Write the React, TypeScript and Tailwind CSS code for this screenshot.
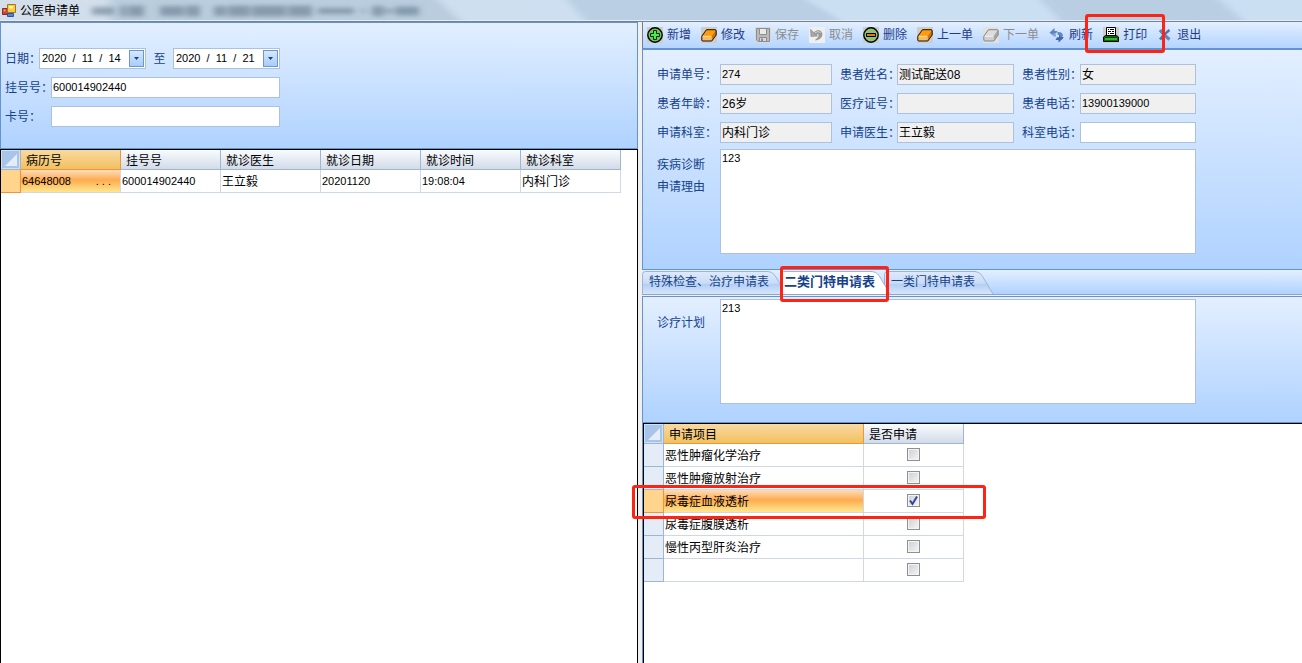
import { useState } from 'react';
import type { ReactNode } from 'react';
import clsx from 'clsx';

const fieldClass =
  'block h-[21px] w-full min-w-0 border border-[#abc1de] px-px pb-[2px] text-black outline-none';

function PlusIcon() {
  return (
    <svg width="16" height="16" viewBox="0 0 16 16">
      <rect width="16" height="16" fill="#cfcdc9" />
      <circle cx="8" cy="8" r="7.2" fill="#7cbf62" stroke="#000" strokeWidth="1.4" />
      <path d="M6.5 3.5h3v3h3v3h-3v3h-3v-3h-3v-3h3z" fill="#3df04c" stroke="#0b2b0b" />
    </svg>
  );
}

function MinusIcon() {
  return (
    <svg width="16" height="16" viewBox="0 0 16 16">
      <rect width="16" height="16" fill="#cfcdc9" />
      <circle cx="8" cy="8" r="7.2" fill="#8cc474" stroke="#000" strokeWidth="1.4" />
      <path d="M3.5 6.5h9v3h-9z" fill="#e8742a" stroke="#000" />
    </svg>
  );
}

function EraserIcon({ muted }: { muted?: boolean }) {
  return (
    <svg width="16" height="16" viewBox="0 0 16 16">
      <rect width="16" height="16" fill={muted ? '#e3e1de' : '#cfcdc9'} />
      <path d="M.8 9L5.5 2.5H15L10.5 9z" fill={muted ? '#dcdcdc' : '#ff9a0a'} />
      <path d="M10.5 9L15 2.8V8l-4.5 6z" fill={muted ? '#a9a9a9' : '#d87400'} />
      <path d="M.8 9h9.7v4.8H.8z" fill={muted ? '#d0d0d0' : '#ffb95c'} />
      <path d="M1.5 9.3h8.5" stroke={muted ? '#f0f0f0' : '#ffdca6'} />
      <path
        d="M.8 13V9.2L5.4 2.7H14q1.2 0 1.2 1.2V8l-4.4 6H1.8q-1 0-1-1z"
        fill="none"
        stroke={muted ? '#858585' : '#1a1000'}
        strokeWidth="1"
      />
    </svg>
  );
}

function SaveIcon() {
  return (
    <svg width="16" height="16" viewBox="0 0 16 16">
      <rect width="16" height="16" fill="#d9d9d9" />
      <path d="M1.5 1.5h13v13H3l-1.5-1.5z" fill="#bababa" stroke="#8c8c8c" />
      <path d="M4.5 1.5h7v6h-7z" fill="#eaeaea" stroke="#8c8c8c" />
      <path d="M4.5 10.5h7v4h-7z" fill="#d8d8d8" stroke="#8c8c8c" />
      <path d="M6 11.5h2v2.5H6z" fill="#8c8c8c" />
    </svg>
  );
}

function UndoIcon() {
  return (
    <svg width="16" height="16" viewBox="0 0 16 16">
      <rect width="16" height="16" fill="#efefef" />
      <path
        d="M4.5 6.5C7 2.5 12.5 2.5 13 7C13.2 10 11 12.5 6.5 13C9 11 10.5 9.5 9.8 7.5C9 6 7.5 7 7 8.5z"
        fill="#9a9a9a"
        stroke="#868686"
        strokeWidth=".6"
      />
      <path d="M1.5 2.5l2.5 2.2L8.5 9 2 9.5z" fill="#a6a6a6" stroke="#868686" strokeWidth=".6" />
      <path d="M6 5.8Q9 3.5 11.5 5.5" fill="none" stroke="#d6d6d6" />
    </svg>
  );
}

function RefreshIcon() {
  return (
    <svg width="16" height="16" viewBox="0 0 16 16">
      <path d="M.5 5.8L5.5 1v3h3L7 6.5H5.5v3z" fill="#5f85bd" />
      <path d="M3 7.5Q3.5 10 7 9.5L7 7.3Q5.500 7.5 5.500 6z" fill="#86a5d0" />
      <path d="M14.8 10.800L9.500 15.5v-2.500H6.500L8 10.300h2V7.300z" fill="#3f68a8" />
      <path d="M8.5 5Q13.8 4.5 14 9L11.500 10Q11 7.500 8.500 7.800z" fill="#6089c2" />
    </svg>
  );
}

function PrinterIcon() {
  return (
    <svg width="16" height="16" viewBox="0 0 16 16">
      <rect width="16" height="16" fill="#cfcdc9" />
      <path d="M3.5 .5h9v8h-9z" fill="#fff" stroke="#000" />
      <path d="M5 2.5h1m1 0h4M5 4.5h3m1 0h2M5 6.5h1m1 0h4" stroke="#000" />
      <path d="M.5 10L2.5 8.5h11l2 1.5v4.5H.5z" fill="#0b6a10" stroke="#000" />
      <path d="M2 10.5h12" stroke="#123c10" />
      <path d="M2 12h12" stroke="#3ee03a" strokeWidth="1.4" />
    </svg>
  );
}

function CloseIcon() {
  return (
    <svg width="16" height="16" viewBox="0 0 16 16" fill="none" stroke="#6186bd">
      <path d="M3 3Q6 7 12.5 12.5" strokeWidth="3.2" />
      <path d="M12.5 3Q7 7 3 12.5" strokeWidth="2.6" stroke="#4f76b2" />
    </svg>
  );
}

function FormIcon() {
  return (
    <svg width="14" height="14" viewBox="0 0 14 14">
      <path d="M.5 4.5h5v6h-5z" fill="#d8402a" stroke="#8c2a1c" />
      <path d="M5.5 .5h8v8h-8z" fill="#fbc93a" stroke="#a37a12" />
      <path d="M7 2h4v2.5H7z" fill="#fff0b0" />
      <path d="M5.5 9.5h6v3h-6z" fill="#4a84e0" stroke="#2a56a8" />
      <path d="M1.5 5.5h2v2h-2z" fill="#f39a86" />
    </svg>
  );
}

// Blurred caption of the window that shines through the glass title bar: x, width, height.
const ghostMarks = [
  [92, 22, 8], [120, 6, 11], [128, 16, 11], [160, 24, 10], [186, 14, 11], [214, 12, 10],
  [228, 22, 11], [252, 34, 11], [288, 24, 11], [318, 36, 6], [362, 3, 5], [372, 12, 10],
  [386, 6, 5], [395, 24, 9],
];

function TitleBar() {
  return (
    <header className="relative flex h-[22px] items-center overflow-hidden border-b border-[#77838f] bg-linear-to-r from-[#d3dfea] to-[#cbdff3] to-60%">
      <svg className="absolute inset-0" width="100%" height="22" aria-hidden="true">
        <defs>
          <filter id="glass" x="-10%" y="-50%" width="120%" height="200%">
            <feGaussianBlur stdDeviation="5 1" />
          </filter>
          <filter id="ghost" x="-10%" y="-50%" width="120%" height="200%">
            <feGaussianBlur stdDeviation="3 2" />
          </filter>
        </defs>
        <g filter="url(#glass)">
          <path d="M110 -4H434L466 26H110z" fill="#b2c7d8" opacity=".75" />
          <path d="M564 -4H800L850 26H590z" fill="#b4c9de" opacity=".75" />
          <path d="M1036 -4H1215L1250 26H1066z" fill="#b3c8de" opacity=".75" />
        </g>
        <g filter="url(#ghost)">
          {ghostMarks.map(([x, w, h]) => (
            <rect key={x} x={x} y={11 - h / 2} width={w} height={h} fill="#54687c" opacity=".5" />
          ))}
        </g>
        <path d="M0 20.5H4000" stroke="#e4edf5" />
      </svg>
      <h1 className="relative flex items-center gap-1 pl-[2px] text-[12px]">
        <FormIcon />
        公医申请单
      </h1>
    </header>
  );
}

function DateField({ id, label, initial }: { id: string; label: string; initial: string }) {
  const [value, setValue] = useState(initial);
  return (
    <div className="flex h-[21px] w-[107px] border border-[#abc1de] bg-white p-px">
      <input
        id={id}
        aria-label={label}
        className="min-w-0 flex-1 px-px pb-[2px] text-[11px] text-black outline-none"
        value={value}
        onChange={(e) => setValue(e.target.value)}
      />
      <button
        type="button"
        aria-label={label + '选择'}
        className="flex w-[15px] items-center justify-center border border-[#6f96cc] bg-linear-to-b from-[#d5e7fd] to-[#a9ccf8]"
      >
        <svg width="5" height="3" viewBox="0 0 5 3">
          <path d="M0 0h5L2.5 3z" fill="#15428b" />
        </svg>
      </button>
    </div>
  );
}

function SearchPanel() {
  return (
    <form className="flex h-[127px] flex-col gap-2 border border-[#6593cf] bg-linear-to-b from-[#e3efff] to-[#afd2ff] pt-[25px] pl-1 text-[#15428b]">
      <div className="flex h-[21px] items-center">
        <label htmlFor="from" className="w-[34px] whitespace-nowrap">日期：</label>
        <DateField id="from" label="开始日期" initial="2020  /  11  /  14" />
        <label htmlFor="to" className="w-[27px] text-center">至</label>
        <DateField id="to" label="结束日期" initial="2020  /  11  /  21" />
      </div>
      <div className="flex h-[21px] items-center">
        <label htmlFor="regNo" className="w-[46px] shrink-0 whitespace-nowrap">挂号号：</label>
        <div className="w-[229px]">
          <input id="regNo" className={clsx(fieldClass, 'bg-white text-[11px]')} defaultValue="600014902440" />
        </div>
      </div>
      <div className="flex h-[21px] items-center">
        <label htmlFor="cardNo" className="w-[46px] shrink-0 whitespace-nowrap">卡号：</label>
        <div className="w-[229px]">
          <input id="cardNo" className={clsx(fieldClass, 'bg-white text-[11px]')} />
        </div>
      </div>
    </form>
  );
}

function HeaderCell({ active, children }: { active?: boolean; children: ReactNode }) {
  return (
    <th
      className={clsx(
        'h-5 border-r border-b bg-linear-to-b pt-[2px] pl-[5px] text-left font-normal',
        active
          ? 'border-[#f29536] from-[#f9d99f] to-[#f1c15f]'
          : 'border-[#9eb6ce] from-[#f9fcfd] to-[#d3dbe9]',
      )}
    >
      {children}
    </th>
  );
}

function CornerCell() {
  return (
    <th className="h-5 border-r border-b border-[#9eb6ce] bg-[#a9c4e9] p-0">
      <svg width="19" height="19" viewBox="0 0 19 19" className="block" aria-hidden="true">
        <path d="M.5 .5h18v18H.5z" fill="none" stroke="#cfdff4" />
        <path d="M16 4v12H4z" fill="#e4ecf7" />
      </svg>
    </th>
  );
}

function VisitTable() {
  return (
    <div className="flex-1 border-x border-t border-black bg-white">
      <table className="w-[620px] table-fixed border-separate border-spacing-0">
        <colgroup>
          <col className="w-5" />
          <col span={6} />
        </colgroup>
        <thead>
          <tr>
            <CornerCell />
            <HeaderCell active>病历号</HeaderCell>
            <HeaderCell>挂号号</HeaderCell>
            <HeaderCell>就诊医生</HeaderCell>
            <HeaderCell>就诊日期</HeaderCell>
            <HeaderCell>就诊时间</HeaderCell>
            <HeaderCell>就诊科室</HeaderCell>
          </tr>
        </thead>
        <tbody>
          <tr className="[&>td]:h-[23px] [&>td]:border-r [&>td]:border-b [&>td]:border-[#d0d7e5] [&>td]:pl-px">
            <th className="border-r border-b border-[#f29536] bg-[#ffd58d]" />
            <td className="bg-linear-to-b from-[#fbdcb8] via-[#ffab4d] via-45% to-[#fee78f] text-[11px]">
              <div className="flex items-center justify-between pr-[9px]">
                64648008
                <button type="button">. . .</button>
              </div>
            </td>
            <td className="text-[11px]">600014902440</td>
            <td className="pt-[2px]">王立毅</td>
            <td className="text-[11px]">20201120</td>
            <td className="text-[11px]">19:08:04</td>
            <td className="pt-[2px]">内科门诊</td>
          </tr>
        </tbody>
      </table>
    </div>
  );
}

const actions = [
  { label: '新增', icon: <PlusIcon /> },
  { label: '修改', icon: <EraserIcon /> },
  { label: '保存', icon: <SaveIcon />, disabled: true },
  { label: '取消', icon: <UndoIcon />, disabled: true },
  { label: '删除', icon: <MinusIcon /> },
  { label: '上一单', icon: <EraserIcon /> },
  { label: '下一单', icon: <EraserIcon muted />, disabled: true },
  { label: '刷新', icon: <RefreshIcon /> },
  { label: '打印', icon: <PrinterIcon />, marked: true },
  { label: '退出', icon: <CloseIcon /> },
];

function Toolbar() {
  return (
    <div className="flex h-[27px] items-center gap-[10px] border-b border-l border-b-[#6593cf] border-l-[#6f7f92] bg-linear-to-b from-[#e3efff] to-[#b4d4ff] pl-1">
      {actions.map((action) => (
        <button
          key={action.label}
          type="button"
          disabled={action.disabled}
          className={clsx(
            'relative flex items-center gap-1 whitespace-nowrap',
            action.disabled ? 'text-[#8d8d8d]' : 'text-[#1e3c8c]',
          )}
        >
          {action.icon}
          {action.label}
          {action.marked && (
            <span className="pointer-events-none absolute -inset-x-[18px] -top-[13px] -bottom-[10px] z-10 rounded-[3px] border-3 border-[#ff2314]" />
          )}
        </button>
      ))}
    </div>
  );
}

const details = [
  { id: 'applyNo', label: '申请单号：', value: '274', numeric: true },
  { id: 'name', label: '患者姓名：', value: '测试配送08' },
  { id: 'gender', label: '患者性别：', value: '女' },
  { id: 'age', label: '患者年龄：', value: '26岁' },
  { id: 'medNo', label: '医疗证号：', value: '' },
  { id: 'phone', label: '患者电话：', value: '13900139000', numeric: true },
  { id: 'dept', label: '申请科室：', value: '内科门诊' },
  { id: 'doctor', label: '申请医生：', value: '王立毅' },
  { id: 'deptPhone', label: '科室电话：', value: '', editable: true },
];

function DetailPanel() {
  return (
    <form className="h-[221px] border border-r-0 border-[#6593cf] bg-linear-to-b from-[#e3efff] to-[#afd2ff] pt-[14px] pl-[14px] text-[#15428b]">
      <div className="grid grid-cols-[63px_112px_65px_117px_66px_116px] items-center gap-y-2">
        {details.map((d, i) => (
          <div key={d.id} className="contents">
            <label htmlFor={d.id} className={clsx('whitespace-nowrap', i % 3 > 0 && 'pl-2')}>
              {d.label}
            </label>
            <input
              id={d.id}
              readOnly={!d.editable}
              defaultValue={d.value}
              className={clsx(
                fieldClass,
                'relative',
                d.editable ? 'bg-white' : 'bg-[#f0f0f0]',
                d.numeric && 'text-[11px]',
              )}
            />
          </div>
        ))}
      </div>
      <div className="mt-[6px] flex">
        <label htmlFor="reason" className="w-[63px] pt-[5px] leading-[22px]">
          疾病诊断
          <br />
          申请理由
        </label>
        <textarea
          id="reason"
          defaultValue="123"
          className="h-[105px] w-[476px] resize-none border border-[#abc1de] bg-white px-px text-[11px] text-black outline-none"
        />
      </div>
    </form>
  );
}

const tabs = [
  { label: '特殊检查、治疗申请表', width: 145 },
  { label: '二类门特申请表', width: 111 },
  { label: '一类门特申请表', width: 110 },
];

function TabStrip() {
  const [active, setActive] = useState(1);
  return (
    <div className="border-b border-[#8ba5cc] bg-linear-to-b from-[#e3efff] to-[#afd2ff]">
      <div role="tablist" className="flex h-6 items-end">
        {tabs.map((tab, i) => {
          const selected = i === active;
          const shape = `M.5 24V3.5Q.5 .5 3.5 .5H${tab.width - 19}q4 0 7 4L${tab.width - 1} 23`;
          return (
            <button
              key={tab.label}
              type="button"
              role="tab"
              aria-selected={selected}
              onClick={() => setActive(i)}
              style={{ width: tab.width }}
              className={clsx(
                'relative flex h-[23px] shrink-0 items-center whitespace-nowrap pb-[2px] text-[#15428b]',
                i > 0 && '-ml-[7px]',
                selected ? 'z-10 pl-1 text-[13px] font-bold' : 'pl-[7px]',
              )}
            >
              <svg className="absolute inset-0" width={tab.width} height="23" aria-hidden="true">
                <defs>
                  <linearGradient id={`tab${i}`} x1="0" y1="0" x2="0" y2="1">
                    <stop offset="0" stopColor={selected ? '#ffffff' : '#dfeafa'} />
                    <stop offset=".5" stopColor={selected ? '#ffffff' : '#c9dcf6'} />
                    <stop offset=".55" stopColor={selected ? '#ffffff' : '#b3cff5'} />
                    <stop offset="1" stopColor={selected ? '#fbfdff' : '#d9e8fb'} />
                  </linearGradient>
                </defs>
                <path d={shape} fill={`url(#tab${i})`} stroke="#9db4d6" />
              </svg>
              <span className="relative">{tab.label}</span>
              {selected && (
                <span className="pointer-events-none absolute -top-[5px] -bottom-2 left-0 z-20 w-[109px] rounded-[3px] border-3 border-[#ff2314]" />
              )}
            </button>
          );
        })}
      </div>
    </div>
  );
}

function PlanPanel() {
  return (
    <form className="mt-px flex h-[127px] border border-r-0 border-[#6593cf] bg-linear-to-b from-[#e3efff] to-[#afd2ff] pt-[2px] pl-[14px] text-[#15428b]">
      <label htmlFor="plan" className="w-[63px] pt-[13px] leading-[22px]">诊疗计划</label>
      <textarea
        id="plan"
        defaultValue="213"
        className="h-[105px] w-[476px] resize-none border border-[#abc1de] bg-white px-px text-[11px] text-black outline-none"
      />
    </form>
  );
}

const initialItems = [
  { name: '恶性肿瘤化学治疗', checked: false },
  { name: '恶性肿瘤放射治疗', checked: false },
  { name: '尿毒症血液透析', checked: true },
  { name: '尿毒症腹膜透析', checked: false },
  { name: '慢性丙型肝炎治疗', checked: false },
  { name: '', checked: false },
];

function ItemTable() {
  const [items, setItems] = useState(initialItems);
  const toggle = (index: number) =>
    setItems(items.map((item, i) => (i === index ? { ...item, checked: !item.checked } : item)));

  return (
    <div className="flex-1 border-l border-[#6593cf]">
      <div className="h-full border-t border-l border-black bg-white">
        <table className="relative w-[320px] table-fixed border-separate border-spacing-0">
          <colgroup>
            <col className="w-5" />
            <col className="w-[200px]" />
            <col className="w-[100px]" />
          </colgroup>
          <thead>
            <tr>
              <CornerCell />
              <HeaderCell active>申请项目</HeaderCell>
              <HeaderCell>是否申请</HeaderCell>
            </tr>
          </thead>
          <tbody>
            {items.map((item, i) => {
              const current = i === 2;
              return (
                <tr key={i} className={clsx(current && 'relative')}>
                  <th
                    className={clsx(
                      'h-[23px] border-r border-b p-0',
                      current ? 'border-[#f29536] bg-[#ffd58d]' : 'border-[#9eb6ce] bg-[#e4ecf7]',
                    )}
                  >
                    {current && (
                      <span className="pointer-events-none absolute -top-[5px] -right-[22px] -bottom-[6px] -left-3 z-10 rounded-[3px] border-3 border-[#ff2314]" />
                    )}
                  </th>
                  <td
                    className={clsx(
                      'border-r border-b border-[#d0d7e5] pt-[2px] pb-0 pl-px',
                      current && 'bg-linear-to-b from-[#fbdcb8] via-[#ffab4d] via-45% to-[#fee78f]',
                    )}
                  >
                    {item.name}
                  </td>
                  <td className="border-r border-b border-[#d0d7e5] p-0">
                    <div className="grid place-items-center pb-px">
                      <input
                        type="checkbox"
                        aria-label={item.name || '新项目'}
                        checked={item.checked}
                        onChange={() => toggle(i)}
                        className="col-start-1 row-start-1 size-[13px] appearance-none border border-[#8e8f8f] bg-linear-to-br from-[#cbcfd5] to-[#f6f6f6] shadow-[inset_0_0_0_1px_#f4f4f4]"
                      />
                      {item.checked && (
                        <svg
                          className="pointer-events-none col-start-1 row-start-1"
                          width="13"
                          height="13"
                          viewBox="0 0 13 13"
                        >
                          <path d="M3 6.5l2.5 3.5L10 2.5" fill="none" stroke="#31479b" strokeWidth="2" />
                        </svg>
                      )}
                    </div>
                  </td>
                </tr>
              );
            })}
          </tbody>
        </table>
      </div>
    </div>
  );
}

export default function App() {
  return (
    <div className="flex min-h-screen flex-col bg-[#f0f0f0] font-['Liberation_Sans','Noto_Sans_CJK_SC',sans-serif] text-[12px] leading-4 text-black">
      <TitleBar />
      <main className="grid flex-1 grid-cols-[638fr_664fr]">
        <section className="flex min-w-0 flex-col">
          <SearchPanel />
          <VisitTable />
        </section>
        <section className="ml-1 flex min-w-0 flex-col">
          <Toolbar />
          <DetailPanel />
          <TabStrip />
          <PlanPanel />
          <ItemTable />
        </section>
      </main>
    </div>
  );
}
